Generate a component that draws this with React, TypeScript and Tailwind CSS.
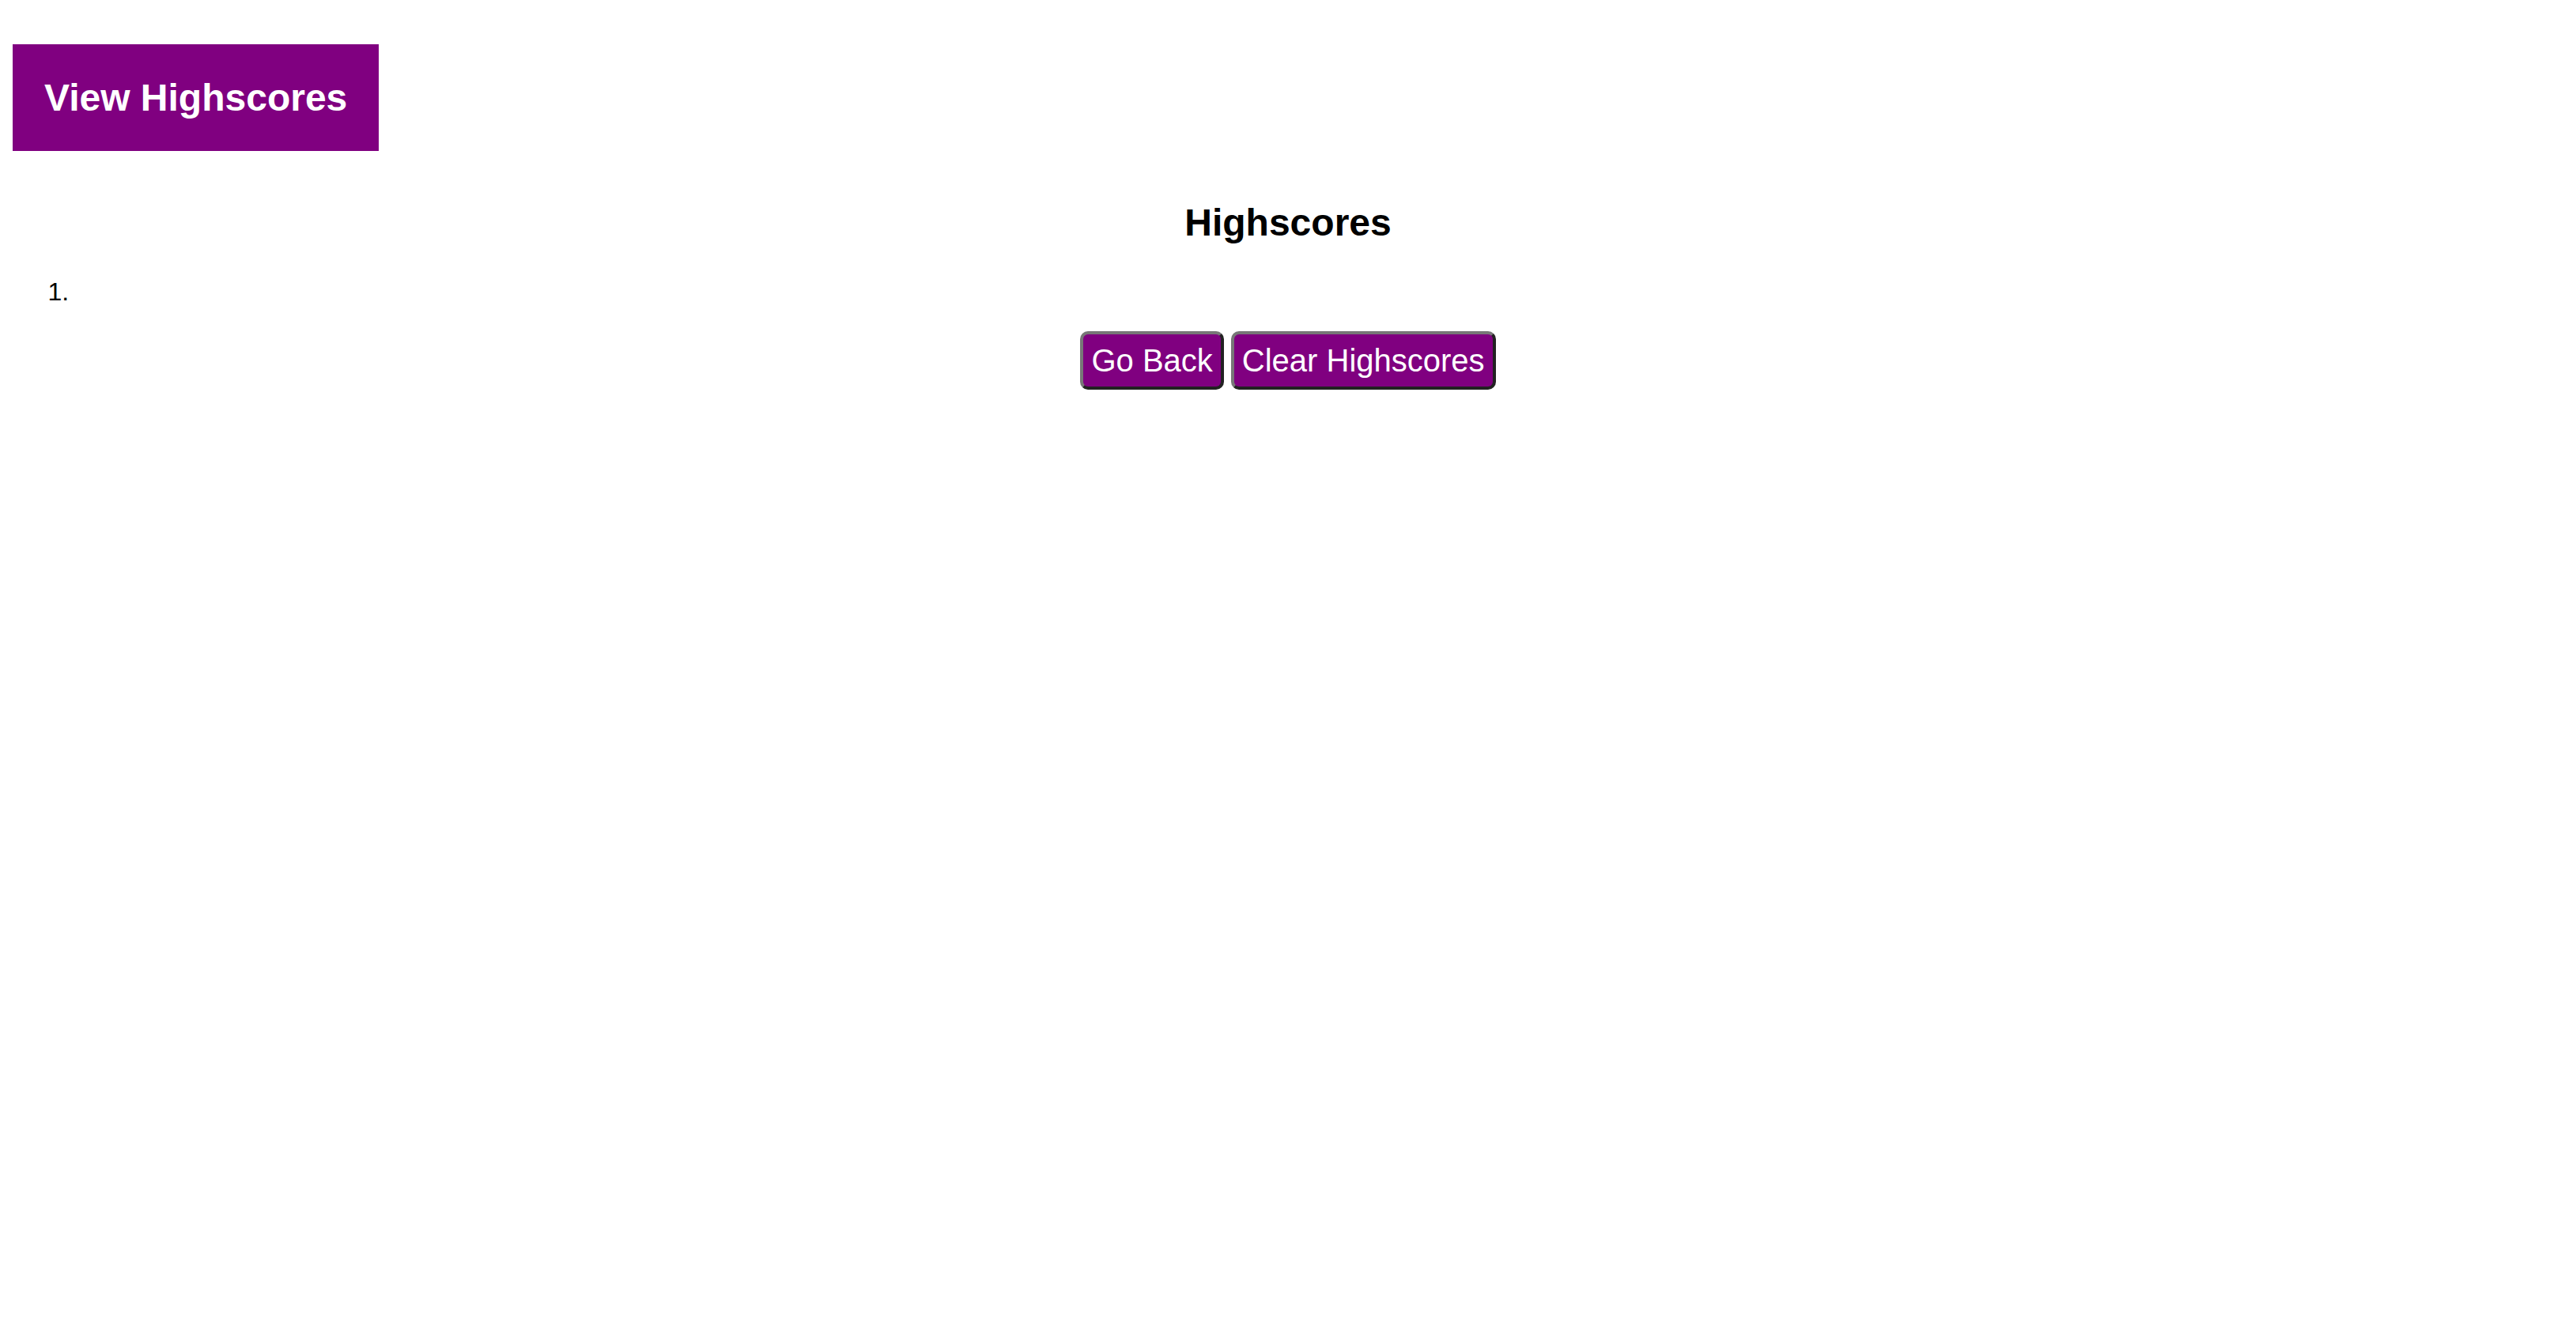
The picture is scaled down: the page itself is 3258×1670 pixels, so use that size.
import React from "react";

const font = { fontFamily: '"Liberation Sans", Arial, Helvetica, sans-serif' };

function ActionButton({ label }: { label: string }) {
  return (
    <button
      type="button"
      className="rounded-[10px] border-[4px] border-t-[#777777] border-l-[#777777] border-r-[#222222] border-b-[#222222] bg-[#800080] px-[10px] py-[10px] text-[40px] leading-[46px] text-white"
    >
      {label}
    </button>
  );
}

export default function App() {
  return (
    <div className="min-h-screen bg-white text-black" style={font}>
      <header className="px-[16px] pt-[56px]">
        <button
          type="button"
          className="bg-[#800080] p-[40px] text-[48px] font-bold leading-[55px] text-white"
        >
          View Highscores
        </button>
      </header>

      <main className="px-[16px]">
        <h2 className="mt-[63px] text-center text-[48px] font-bold leading-[55px]">Highscores</h2>
        <ol className="mt-[42px] list-outside list-decimal pl-[80px] text-[32px] leading-[37px]">
          <li>&nbsp;</li>
        </ol>
        <div className="mt-[31px] flex justify-center gap-[9px]">
          <ActionButton label="Go Back" />
          <ActionButton label="Clear Highscores" />
        </div>
      </main>
    </div>
  );
}
